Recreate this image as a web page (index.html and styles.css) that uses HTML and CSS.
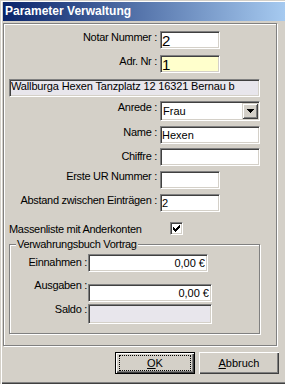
FILE: index.html
```html
<!DOCTYPE html>
<html>
<head>
    <meta charset="utf-8">
    <link rel="stylesheet" href="styles.css">
</head>
<body>
    <div class="window">
        <div class="titlebar">Parameter Verwaltung</div>
        <div class="panel">
            <div class="row">
                <label class="lbl">Notar Nummer :</label>
                <input class="edit short big" value="2">
            </div>
            <div class="row gap6">
                <label class="lbl">Adr. Nr :</label>
                <input class="edit short big yellow" value="1">
            </div>
            <input class="edit address" value="Wallburga Hexen Tanzplatz 12 16321 Bernau b" readonly>
            <div class="row gap4">
                <label class="lbl">Anrede :</label>
                <div class="combo">
                    <span class="combo-text">Frau</span>
                    <span class="combo-btn">
                        <svg width="7" height="4" viewBox="0 0 7 4" shape-rendering="crispEdges"><path d="M0 0h7v1H0zM1 1h5v1H1zM2 2h3v1H2zM3 3h1v1H3z" fill="#000"/></svg>
                    </span>
                </div>
            </div>
            <div class="row gap5">
                <label class="lbl">Name :</label>
                <input class="edit wide" value="Hexen">
            </div>
            <div class="row gap4">
                <label class="lbl lbl-low">Chiffre :</label>
                <input class="edit wide" value="">
            </div>
            <div class="row gap5">
                <label class="lbl lbl-high">Erste UR Nummer :</label>
                <input class="edit short" value="">
            </div>
            <div class="row gap5">
                <label class="lbl">Abstand zwischen Einträgen :</label>
                <input class="edit short" value="2">
            </div>
            <div class="row check-row">
                <label class="check-lbl">Massenliste mit Anderkonten</label>
                <span class="checkbox">
                    <svg width="7" height="7" viewBox="0 0 7 7" shape-rendering="crispEdges"><path d="M0 2h1v3H0zM1 3h1v3H1zM2 4h1v3H2zM3 3h1v3H3zM4 2h1v3H4zM5 1h1v3H5zM6 0h1v3H6z" fill="#000"/></svg>
                </span>
            </div>
            <fieldset class="group">
                <legend>Verwahrungsbuch Vortrag</legend>
                <div class="row gap4">
                    <label class="lbl2 lbl-ein">Einnahmen :</label>
                    <input class="edit money" value="0,00 €">
                </div>
                <div class="row gap12">
                    <label class="lbl2 lbl-aus">Ausgaben :</label>
                    <input class="edit money wider" value="0,00 €">
                </div>
                <div class="row gap2">
                    <label class="lbl2 lbl-saldo">Saldo :</label>
                    <input class="edit money wider saldo" value="" readonly>
                </div>
            </fieldset>
        </div>
        <div class="buttons">
            <button class="btn btn-default"><span class="focus"><u>O</u>K</span></button>
            <button class="btn"><span><u>A</u>bbruch</span></button>
        </div>
    </div>
</body>
</html>
```

FILE: styles.css
```css
* {
    box-sizing: border-box;
}

body {
    margin: 0;
    background: #d4d0c8;
    font-family: "Liberation Sans", Arial, sans-serif;
    font-size: 11px;
    color: #000;
}

.window {
    width: 285px;
    height: 384px;
    background: #d4d0c8;
    border-left: 1px solid #d4d0c8;
    border-top: 1px solid #d4d0c8;
    padding: 1px 0 0 2px;
    box-shadow: inset 1px 1px #fff, inset 0 -1px #404040, inset 0 -2px #808080;
}

.titlebar {
    height: 19px;
    line-height: 19px;
    padding-left: 2px;
    background: linear-gradient(to right, #0a246a, #a6caf0);
    color: #fff;
    font-weight: bold;
    font-size: 12px;
    white-space: nowrap;
}

.panel {
    margin-top: 2px;
    width: 274px;
    height: 323px;
    padding-top: 7px;
    border: 1px solid #808080;
    box-shadow: inset 1px 1px #fff, 1px 1px #fff;
}

.row {
    display: flex;
    align-items: flex-start;
}

.gap2 { margin-top: 2px; }
.gap4 { margin-top: 4px; }
.gap5 { margin-top: 5px; }
.gap6 { margin-top: 6px; }
.gap12 { margin-top: 12px; }

.lbl {
    width: 153px;
    margin-right: 3px;
    text-align: right;
    line-height: 12px;
    letter-spacing: -0.3px;
    white-space: nowrap;
}

.lbl-low { padding-top: 2px; }
.lbl-high { margin-top: -1px; }

.edit {
    display: block;
    height: 18px;
    margin: 0;
    padding: 0 1px;
    border: 1px solid;
    border-color: #808080 #fff #fff #808080;
    box-shadow: inset 1px 1px #404040, inset -1px -1px #d4d0c8;
    background: #fff;
    font-family: inherit;
    font-size: 11px;
    color: #000;
    outline: none;
}

.short { width: 60px; }
.wide { width: 100px; }
.big { font-size: 15px; }
.yellow { background: #ffffcc; }

.address {
    width: 251px;
    margin: 6px 0 0 5px;
    padding: 0 1px 5px;
    background: #e8e6ec;
    letter-spacing: -0.15px;
}

.combo {
    display: flex;
    width: 100px;
    height: 20px;
    padding: 1px;
    border: 1px solid;
    border-color: #808080 #fff #fff #808080;
    box-shadow: inset 1px 1px #404040, inset -1px -1px #d4d0c8;
    background: #fff;
}

.combo-text {
    flex: 1;
    padding: 2px 0 0 1px;
    line-height: 12px;
}

.combo-btn {
    display: flex;
    align-items: center;
    justify-content: center;
    width: 16px;
    height: 16px;
    background: #d4d0c8;
    box-shadow: inset 1px 1px #d4d0c8, inset -1px -1px #404040, inset 2px 2px #fff, inset -2px -2px #808080;
}

.check-row {
    margin-top: 10px;
    align-items: center;
}

.check-lbl {
    width: 166px;
    padding-left: 5px;
    line-height: 12px;
    letter-spacing: -0.3px;
    white-space: nowrap;
}

.checkbox {
    display: flex;
    align-items: center;
    justify-content: center;
    width: 13px;
    height: 13px;
    border: 1px solid;
    border-color: #808080 #fff #fff #808080;
    box-shadow: inset 1px 1px #404040, inset -1px -1px #d4d0c8;
    background: #fff;
}

.group {
    width: 251px;
    margin: 3px 0 0 5px;
    padding: 0 0 9px;
    border: 1px solid #808080;
    box-shadow: inset 1px 1px #fff, 1px 1px #fff;
}

.group legend {
    margin-left: 6px;
    padding: 0 1px;
    line-height: 12px;
    letter-spacing: -0.3px;
    background: #d4d0c8;
}

.lbl2 {
    width: 77px;
    margin-right: 1px;
    text-align: right;
    line-height: 12px;
    letter-spacing: -0.3px;
    white-space: nowrap;
}

.lbl-ein { padding-top: 2px; }
.lbl-aus { margin-top: -5px; }
.lbl-saldo { margin-top: -1px; }

.money {
    width: 120px;
    padding-right: 2px;
    text-align: right;
}

.wider { width: 124px; }

.saldo {
    height: 20px;
    background: #e8e6ec;
}

.buttons {
    display: flex;
    justify-content: flex-end;
    gap: 4px;
    margin-top: 6px;
    margin-right: 6px;
}

.btn {
    display: flex;
    align-items: center;
    justify-content: center;
    width: 80px;
    height: 22px;
    margin: 0;
    padding: 0;
    border: none;
    background: #d4d0c8;
    box-shadow: inset 1px 1px #fff, inset -1px -1px #404040, inset -2px -2px #808080;
    font-family: inherit;
    font-size: 11px;
    color: #000;
}

.btn-default {
    border: 1px solid #000;
}

.focus {
    display: flex;
    align-items: center;
    justify-content: center;
    width: 72px;
    height: 16px;
    border: 1px dotted #000;
}

.btn u {
    text-decoration-thickness: 1px;
}
```
